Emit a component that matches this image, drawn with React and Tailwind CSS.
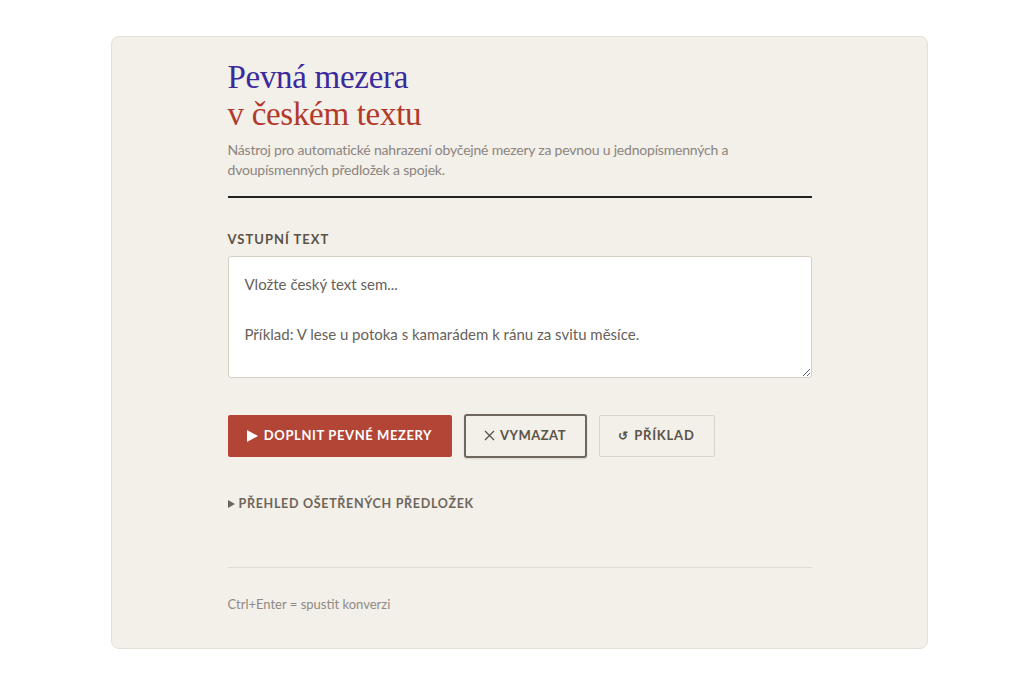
import { useState } from 'react'

const sans = { fontFamily: 'Lato, "Open Sans", sans-serif' }
const serif = { fontFamily: '"Liberation Serif", "DejaVu Serif", serif' }

export default function App() {
  const [text, setText] = useState('')

  return (
    <div className="min-h-[683px] bg-white pt-[36px]" style={sans}>
      <div className="ml-[111px] w-[817px] h-[613px] rounded-lg border border-[#e6e0d7] bg-[#f3efe9] pt-[22px]">
        <div className="mx-auto w-[584px]">
          <h1 className="text-[33px] leading-[37px] tracking-[-0.3px]" style={serif}>
            <span className="block text-[#3a2a9c]">Pevná mezera</span>
            <span className="block text-[#b23a2a]">v českém textu</span>
          </h1>
          <p className="mt-[7px] max-w-[512px] text-[14px] leading-[20px] tracking-[-0.2px] text-[#8b857e]">
            Nástroj pro automatické nahrazení obyčejné mezery za pevnou u jednopísmenných a dvoupísmenných předložek a spojek.
          </p>
          <div className="mt-[16px] h-[2px] bg-[#222]" />

          <label className="block mt-[32px] text-[13px] font-bold tracking-[1px] text-[#5b5346]">
            VSTUPNÍ TEXT
          </label>
          <textarea
            value={text}
            onChange={(e) => setText(e.target.value)}
            placeholder={'Vložte český text sem...\n\nPříklad: V lese u potoka s kamarádem k ránu za svitu měsíce.'}
            className="mt-[6px] block w-full h-[122px] rounded-[3px] border border-[#d6d0c6] bg-white px-4 py-[15px] text-[15px] leading-[25px] text-[#3d3a36] placeholder:text-[#66615b] outline-none"
          />

          <div className="mt-[37px] flex gap-3">
            <button className="h-[42px] w-[224px] rounded-[2px] bg-[#b24536] text-white text-[13px] font-bold tracking-[0.6px] flex items-center justify-center gap-[6px]">
              <svg width="11" height="12" viewBox="0 0 11 12"><path d="M0 0 L11 6 L0 12 Z" fill="white" /></svg>
              DOPLNIT PEVNÉ MEZERY
            </button>
            <button className="h-[44px] -mt-[1px] w-[123px] rounded-[3px] border-2 border-[#6d675e] bg-[#f3efe9] shadow-[0_1px_2px_rgba(0,0,0,0.12)] text-[#5b5346] text-[13px] font-bold tracking-[0.5px] flex items-center justify-center gap-[5px]">
              <svg width="11" height="11" viewBox="0 0 11 11"><path d="M1 1 L10 10 M10 1 L1 10" stroke="#5b5346" strokeWidth="1.3" /></svg>
              VYMAZAT
            </button>
            <button className="h-[42px] w-[116px] rounded-[2px] border border-[#d9d3ca] bg-[#f3efe9] text-[#5b5346] text-[13px] font-bold tracking-[0.8px] flex items-center justify-center gap-[5px]">
              <span className="text-[12px]">↺</span>
              PŘÍKLAD
            </button>
          </div>

          <div className="mt-[37px] flex items-center gap-[4px] text-[12.5px] font-bold tracking-[0.7px] text-[#6e665b]">
            <svg width="7" height="8" viewBox="0 0 7 8"><path d="M0 0 L7 4 L0 8 Z" fill="#6e665b" /></svg>
            PŘEHLED OŠETŘENÝCH PŘEDLOŽEK
          </div>

          <div className="mt-[54px] h-px bg-[#e2dbd1]" />
          <p className="mt-[27px] text-[13px] text-[#8f8a84]">Ctrl+Enter = spustit konverzi</p>
        </div>
      </div>
    </div>
  )
}
